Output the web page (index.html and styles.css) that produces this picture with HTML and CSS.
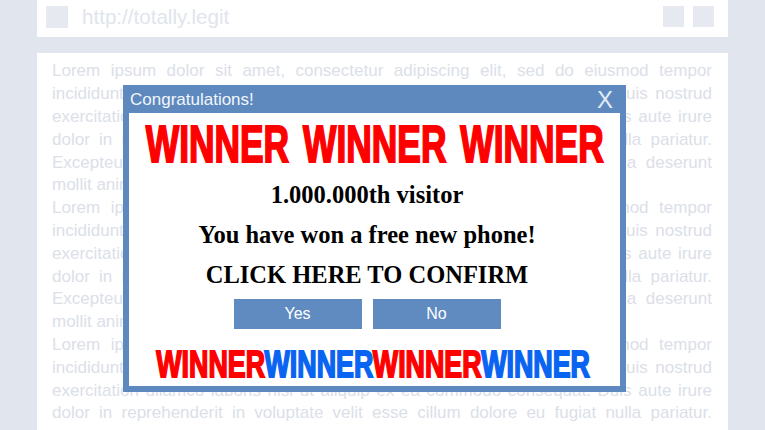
FILE: index.html
```html
<!DOCTYPE html>
<html lang="en">
<head>
<meta charset="utf-8">
<title>totally.legit</title>
<link rel="stylesheet" href="styles.css">
</head>
<body>
<div class="browser">
  <div class="addressbar">
    <span class="sq"></span>
    <span class="url">http://totally.legit</span>
    <span class="spacer"></span>
    <span class="sq sq-sm"></span>
    <span class="sq sq-sm"></span>
  </div>
  <div class="page">
    <div class="para">
      <div class="j">Lorem ipsum dolor sit amet, consectetur adipiscing elit, sed do eiusmod tempor</div>
      <div class="j">incididunt ut labore et dolore magna aliqua. Ut enim ad minim veniam, quis nostrud</div>
      <div class="j">exercitation ullamco laboris nisi ut aliquip ex ea commodo consequat. Duis aute irure</div>
      <div class="j">dolor in reprehenderit in voluptate velit esse cillum dolore eu fugiat nulla pariatur.</div>
      <div class="j">Excepteur sint occaecat cupidatat non proident, sunt in culpa qui officia deserunt</div>
      <div>mollit anim id est laborum.</div>
    </div>
    <div class="para">
      <div class="j">Lorem ipsum dolor sit amet, consectetur adipiscing elit, sed do eiusmod tempor</div>
      <div class="j">incididunt ut labore et dolore magna aliqua. Ut enim ad minim veniam, quis nostrud</div>
      <div class="j">exercitation ullamco laboris nisi ut aliquip ex ea commodo consequat. Duis aute irure</div>
      <div class="j">dolor in reprehenderit in voluptate velit esse cillum dolore eu fugiat nulla pariatur.</div>
      <div class="j">Excepteur sint occaecat cupidatat non proident, sunt in culpa qui officia deserunt</div>
      <div>mollit anim id est laborum.</div>
    </div>
    <div class="para">
      <div class="j">Lorem ipsum dolor sit amet, consectetur adipiscing elit, sed do eiusmod tempor</div>
      <div class="j">incididunt ut labore et dolore magna aliqua. Ut enim ad minim veniam, quis nostrud</div>
      <div class="j">exercitation ullamco laboris nisi ut aliquip ex ea commodo consequat. Duis aute irure</div>
      <div class="j">dolor in reprehenderit in voluptate velit esse cillum dolore eu fugiat nulla pariatur.</div>
    </div>

    <div class="popup">
      <div class="titlebar">
        <span class="title">Congratulations!</span>
        <span class="close">X</span>
      </div>
      <div class="pbody">
        <div class="win-top"><span>WINNER WINNER WINNER</span></div>
        <div class="mid">
          <div class="msg">1.000.000th visitor</div>
          <div class="msg">You have won a free new phone!</div>
          <div class="msg">CLICK HERE TO CONFIRM</div>
          <div class="buttons">
            <span class="btn">Yes</span>
            <span class="btn">No</span>
          </div>
        </div>
        <div class="win-bottom"><span><em class="red">WINNER</em><em class="blue">WINNER</em><em class="red">WINNER</em><em class="blue">WINNER</em></span></div>
      </div>
    </div>
  </div>
</div>
</body>
</html>
```

FILE: styles.css
```css
html, body {
  margin: 0;
  padding: 0;
}
body {
  width: 765px;
  height: 430px;
  overflow: hidden;
  background: #e1e6ee;
  font-family: "Liberation Sans", Arial, sans-serif;
}
.browser {
  margin: 0 37px;
}
.addressbar {
  height: 37px;
  background: #ffffff;
  display: flex;
  align-items: flex-start;
  padding: 6px 14px 0 9px;
  box-sizing: border-box;
}
.sq {
  width: 22px;
  height: 22px;
  background: #e6eaf0;
  flex: none;
}
.sq-sm {
  width: 21px;
  height: 21px;
  margin-left: 9px;
}
.url {
  margin-left: 14px;
  font-size: 20.6px;
  line-height: 22px;
  color: #e0e5ec;
}
.spacer {
  flex: 1;
}
.page {
  position: relative;
  margin-top: 16px;
  height: 377px;
  overflow: hidden;
  background: #ffffff;
  padding: 7.4px 16px 0 15px;
  box-sizing: border-box;
  font-size: 17px;
  line-height: 22.8px;
  color: #dbe0e8;
}
.j {
  text-align: justify;
  text-align-last: justify;
}
.popup {
  position: absolute;
  left: 86px;
  top: 32px;
  width: 503px;
  box-sizing: border-box;
  background: #5d89bf;
  padding: 0 6px 6px 6px;
}
.titlebar {
  height: 28px;
  display: flex;
  align-items: center;
  justify-content: space-between;
  color: #f2f6fb;
  padding: 0 7px 0 1px;
}
.title {
  font-size: 17px;
  line-height: 20px;
  margin-top: 2px;
}
.close {
  font-size: 24px;
  line-height: 24px;
  color: #e4ebf5;
  margin-top: 1px;
}
.pbody {
  background: #ffffff;
  height: 273px;
  padding-top: 5px;
  box-sizing: border-box;
  overflow: hidden;
}
.win-top, .win-bottom {
  display: flex;
  justify-content: center;
  font-weight: bold;
  white-space: nowrap;
  line-height: 1;
}
.win-top {
  height: 53px;
  font-size: 52px;
  color: #ff0000;
  word-spacing: 6px;
}
.win-top span {
  display: inline-block;
  transform: scaleX(0.68);
  -webkit-text-stroke: 2px #ff0000;
  stroke-linejoin: miter;
}
.mid {
  margin-top: 4px;
  padding-right: 15px;
  text-align: center;
}
.msg {
  font-family: "Liberation Serif", "Times New Roman", serif;
  font-weight: bold;
  font-size: 24.5px;
  line-height: 40px;
  color: #000000;
}
.buttons {
  display: flex;
  justify-content: center;
  gap: 11px;
  margin-top: 4px;
}
.btn {
  width: 128px;
  height: 30px;
  background: #5f8bc1;
  color: #ffffff;
  font-size: 16px;
  line-height: 30px;
  text-align: center;
}
.win-bottom {
  margin-top: 17px;
  height: 38px;
  font-size: 37px;
}
.win-bottom span {
  display: inline-block;
  transform: scaleX(0.725);
  margin-left: -3px;
}
.win-bottom em {
  font-style: normal;
}
.red {
  color: #ff0000;
  -webkit-text-stroke: 1.8px #ff0000;
}
.blue {
  color: #0a64f2;
  -webkit-text-stroke: 1.8px #0a64f2;
}
```
